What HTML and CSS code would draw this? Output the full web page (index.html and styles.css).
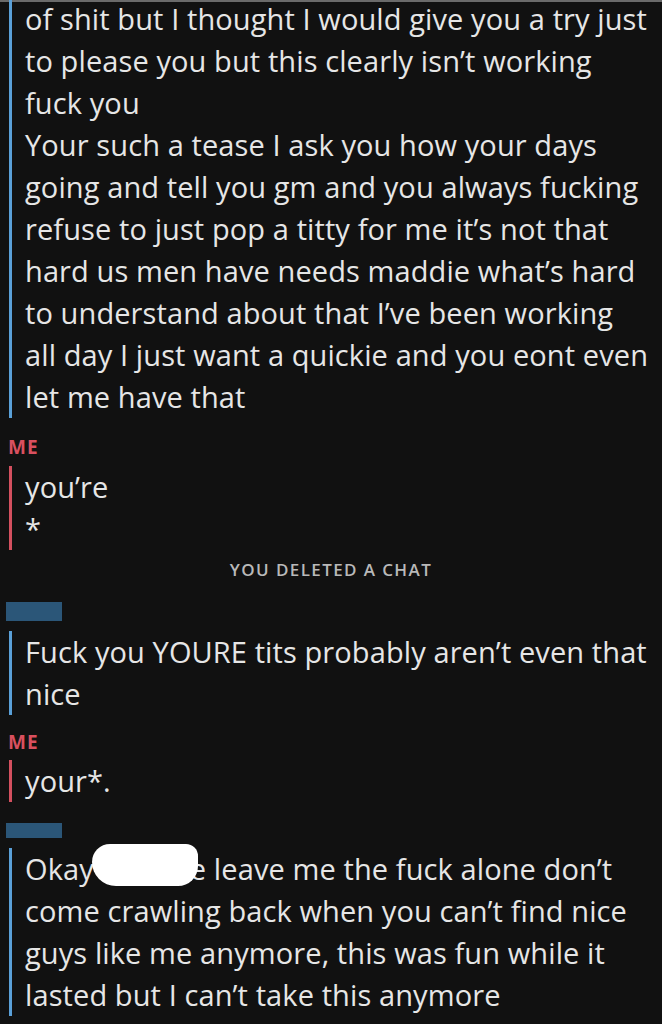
FILE: index.html
```html
<!DOCTYPE html>
<html lang="en">
<head>
    <meta charset="UTF-8">
    <title>Chat</title>
    <link rel="stylesheet" href="styles.css">
</head>
<body>

<!--chat screen-->
<div class="chat">

    <!--their message, cut off at the top-->
    <div class="bubble them first">
        of shit but I thought I would give you a try just<br>
        to please you but this clearly isn’t working<br>
        fuck you<br>
        Your such a tease I ask you how your days<br>
        going and tell you gm and you always fucking<br>
        refuse to just pop a titty for me it’s not that<br>
        hard us men have needs maddie what’s hard<br>
        to understand about that I’ve been working<br>
        all day I just want a quickie and you eont even<br>
        let me have that
    </div>

    <div class="sender me-label gap-a">ME</div>
    <div class="bubble me">
        you’re<br>
        *
    </div>

    <div class="system">YOU DELETED A CHAT</div>

    <!--name hidden-->
    <div class="sender hidden-name tall"></div>
    <div class="bubble them">
        Fuck you YOURE tits probably aren’t even that<br>
        nice
    </div>

    <div class="sender me-label gap-b">ME</div>
    <div class="bubble me">
        your*.
    </div>

    <div class="sender hidden-name short"></div>
    <div class="bubble them">
        Okay<span class="blot"></span>e leave me the fuck alone don’t<br>
        come crawling back when you can’t find nice<br>
        guys like me anymore, this was fun while it<br>
        lasted but I can’t take this anymore
    </div>

</div>

</body>
</html>
```

FILE: styles.css
```css
/*reset*/
* {
    margin: 0;
    padding: 0;
    box-sizing: border-box;
}

body {
    background-color: #111111;
    width: 662px;
    height: 1024px;
    overflow: hidden;
}

.chat {
    border-top: 2px solid #6a6a6a;
    font-family: "Open Sans", Lato, sans-serif;
    color: #e6e6e6;
}

/*message body with the coloured bar on the left*/
.bubble {
    margin-left: 9px;
    padding-left: 13px;
    border-left: 3px solid #5aa0d8;
    font-size: 29px;
    line-height: 42px;
    letter-spacing: 0.1px;
    white-space: nowrap;
}

.bubble.first {
    margin-top: -4px;
}

.bubble.me {
    border-left-color: #d4505f;
}

/*sender name row*/
.sender {
    margin-left: 8px;
    margin-bottom: 7px;
}

.me-label {
    color: #d9505f;
    font-weight: bold;
    font-size: 19px;
    line-height: 24px;
    letter-spacing: 1px;
}

.gap-a {
    margin-top: 17px;
}

.gap-b {
    margin-top: 15px;
    margin-bottom: 6px;
}

.hidden-name {
    margin-left: 6px;
    width: 56px;
    background-color: #2b5678;
    margin-bottom: 10px;
}

.hidden-name.tall {
    height: 19px;
    margin-top: 22px;
}

.hidden-name.short {
    height: 15px;
    margin-top: 21px;
}

.system {
    margin-top: 10px;
    text-align: center;
    color: #b9b9b9;
    font-weight: 600;
    font-size: 17px;
    line-height: 20px;
    letter-spacing: 1.4px;
}

/*white scribble over the name*/
.blot {
    display: inline-block;
    position: relative;
    width: 106px;
    height: 42px;
    margin: -6px -8px 0 -2px;
    vertical-align: -6px;
    background-color: #ffffff;
    border-radius: 18px 12px 20px 24px;
}
```
